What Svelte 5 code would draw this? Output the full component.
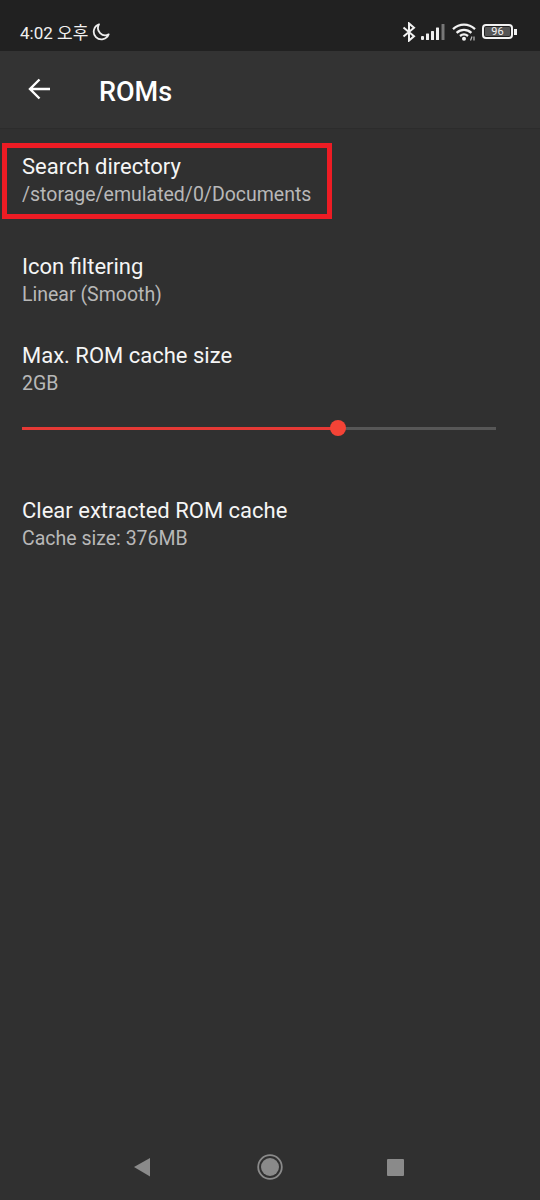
<script lang="ts">
  const rows = [
    { title: "Search directory", sub: "/storage/emulated/0/Documents" },
    { title: "Icon filtering", sub: "Linear (Smooth)" },
  ];
  const cachePct = 66.6;
</script>

<div class="screen">
  <div class="status-bar">
    <div class="status-left">
      <span class="clock">4:02 오후</span>
      <svg width="18" height="18" viewBox="0 0 18 18">
        <path d="M7 1.400A7.700 7.700 0 1 0 16.700 11.300 7.200 7.200 0 0 1 7 1.400Z" fill="none" stroke="#eee" stroke-width="1.800" stroke-linejoin="round" />
      </svg>
    </div>
    <div class="status-right">
      <svg width="14" height="20" viewBox="0 0 14 20">
        <path d="M1.500 5.500 12 14.200 7 18.600V1.400L12 5.800 1.500 14.500" fill="none" stroke="#f2f2f2" stroke-width="2" />
      </svg>
      <svg width="25" height="16" viewBox="0 0 25 16">
        <rect x="0" y="12" width="3" height="4" rx="1" fill="#eee" />
        <rect x="5" y="9.500" width="3" height="6.500" rx=".5" fill="#eee" />
        <rect x="10" y="7" width="3" height="9" rx=".5" fill="#eee" />
        <rect x="15" y="3.500" width="3" height="12.500" rx=".5" fill="#eee" />
        <rect x="20.500" y="0" width="3" height="16" rx=".5" fill="#777" />
      </svg>
      <svg class="wifi" width="25" height="18" viewBox="0 0 25 18">
        <path d="M1 6.200C7.500 .2 16.500 .2 23 6.200M4.600 9.800C9 5.800 15 5.800 19.400 9.800M8 13C10.500 10.900 13.500 10.900 16 13" fill="none" stroke="#f2f2f2" stroke-width="2.300" />
        <circle cx="12" cy="15.800" r="2" fill="#f2f2f2" />
        <path d="M18.500 17.500 20 13.500M22 17.500V13.500" stroke="#bbb" stroke-width="1.200" />
      </svg>
      <div class="battery">
        <div class="battery-body"><span>96</span></div>
        <div class="battery-tip"></div>
      </div>
    </div>
  </div>

  <div class="toolbar">
    <svg width="24" height="24" viewBox="0 0 24 24">
      <path d="M23 12H3M12.500 2.500 3 12l9.500 9.500" fill="none" stroke="#fff" stroke-width="2.400" />
    </svg>
    <h1>ROMs</h1>
  </div>

  <div class="content">
    {#each rows as row, i}
      <div class="row" class:first={i === 0}>
        <div class="title">{row.title}</div>
        <div class="sub">{row.sub}</div>
      </div>
    {/each}

    <div class="row slider-row">
      <div class="title">Max. ROM cache size</div>
      <div class="sub">2GB</div>
      <div class="slider">
        <div class="slider-fill" style="width: {cachePct}%"></div>
        <div class="slider-rest"></div>
        <div class="slider-thumb" style="left: {cachePct}%"></div>
      </div>
    </div>

    <div class="row">
      <div class="title">Clear extracted ROM cache</div>
      <div class="sub">Cache size: 376MB</div>
    </div>

    <div class="highlight"></div>
  </div>

  <div class="nav-bar">
    <svg width="18" height="20" viewBox="0 0 18 20"><path d="M17 1V19.500L1 10Z" fill="#8a8a8a" /></svg>
    <svg class="nav-home" width="26" height="26" viewBox="0 0 26 26">
      <circle cx="13" cy="13" r="11.800" fill="none" stroke="#8a8a8a" stroke-width="1.800" />
      <circle cx="13" cy="13" r="9" fill="#8a8a8a" />
    </svg>
    <div class="nav-square"></div>
  </div>
</div>

<style>
  :global(body) {
    margin: 0;
    background: #303030;
  }
  .screen {
    width: 540px;
    height: 1200px;
    display: flex;
    flex-direction: column;
    background: #303030;
    font-family: Roboto, "Noto Sans CJK KR", sans-serif;
    overflow: hidden;
  }
  .status-bar {
    height: 51px;
    flex-shrink: 0;
    display: flex;
    align-items: center;
    justify-content: space-between;
    padding: 12px 23px 0 20px;
    background: #212121;
    box-sizing: border-box;
  }
  .status-left {
    display: flex;
    align-items: center;
    gap: 4px;
  }
  .clock {
    font-size: 17px;
    color: #f0f0f0;
  }
  .status-right {
    display: flex;
    align-items: center;
    gap: 5px;
  }
  .wifi {
    margin-left: 1px;
  }
  .battery {
    display: flex;
    align-items: center;
    gap: 1px;
  }
  .battery-body {
    width: 31px;
    height: 15px;
    padding: 1px;
    border: 2px solid #f2f2f2;
    border-radius: 4px;
    background-color: #555;
    background-clip: content-box;
    box-sizing: border-box;
    display: flex;
    align-items: center;
    justify-content: center;
  }
  .battery-body span {
    font-size: 11px;
    line-height: 1;
    color: #f2f2f2;
  }
  .battery-tip {
    width: 3px;
    height: 6px;
    background: #f2f2f2;
  }
  .toolbar {
    height: 78px;
    flex-shrink: 0;
    display: flex;
    align-items: center;
    padding-left: 27px;
    background: #333;
    border-bottom: 1px solid #2c2c2c;
    box-sizing: border-box;
  }
  .toolbar svg {
    margin-bottom: 2px;
  }
  .toolbar h1 {
    margin: 4px 0 0 48px;
    font-size: 27px;
    font-weight: 500;
    color: #fff;
  }
  .content {
    position: relative;
    flex: 1;
  }
  .row {
    padding: 0 22px;
    margin-top: 44px;
  }
  .row.first {
    margin-top: 24px;
  }
  .title {
    font-size: 22px;
    line-height: 28px;
    color: #f5f5f5;
  }
  .sub {
    font-size: 19.500px;
    line-height: 28px;
    color: #b8b8b8;
  }
  .slider-row {
    margin-top: 33px;
  }
  .slider {
    position: relative;
    display: flex;
    align-items: center;
    width: 474px;
    height: 16px;
    margin-top: 22px;
    margin-bottom: 61px;
  }
  .slider-fill {
    height: 3px;
    background: #e53935;
  }
  .slider-rest {
    flex: 1;
    height: 3px;
    background: #575757;
  }
  .slider-thumb {
    position: absolute;
    top: 0;
    width: 16px;
    height: 16px;
    margin-left: -8px;
    border-radius: 50%;
    background: #f44336;
  }
  .slider-row + .row {
    margin-top: 0;
  }
  .highlight {
    position: absolute;
    left: 2px;
    top: 14px;
    width: 330px;
    height: 76px;
    border: 5px solid #ed1c24;
    box-sizing: border-box;
  }
  .nav-bar {
    height: 66px;
    flex-shrink: 0;
    display: flex;
    align-items: center;
    padding-left: 133px;
    box-sizing: border-box;
  }
  .nav-home {
    margin: 0 104px 0 106px;
  }
  .nav-square {
    width: 17px;
    height: 17px;
    border-radius: 1px;
    background: #8a8a8a;
  }
</style>
